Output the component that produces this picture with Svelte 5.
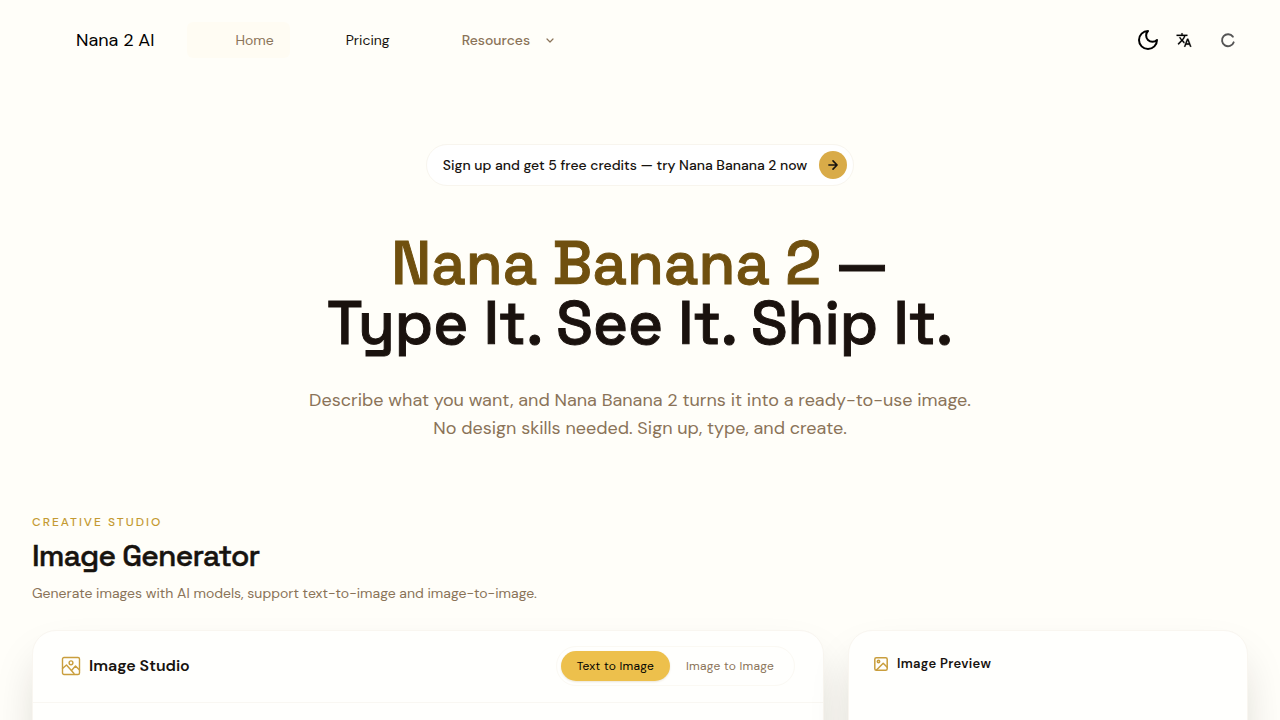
<script>
  let mode = $state('text');
  const modes = [
    { id: 'text', label: 'Text to Image' },
    { id: 'image', label: 'Image to Image' }
  ];
</script>

<div class="page">
  <header class="bar">
    <a class="brand" href="#home"><span class="logo"></span>Nana 2 AI</a>
    <nav aria-label="Main">
      <a class="item current" href="#home">Home</a>
      <a class="item strong" href="#pricing">Pricing</a>
      <button class="item menu" type="button">
        Resources
        <svg width="12" height="12" viewBox="0 0 24 24" fill="none" stroke="currentColor" stroke-width="2.4" stroke-linecap="round" stroke-linejoin="round"><path d="m6 10 6 6 6-6" /></svg>
      </button>
    </nav>
    <div class="tools">
      <button type="button" aria-label="Theme">
        <svg width="24" height="24" viewBox="0 0 24 24" fill="none" stroke="currentColor" stroke-width="2" stroke-linecap="round" stroke-linejoin="round"><path d="M12 3a6 6 0 0 0 9 9 9 9 0 1 1-9-9Z" /></svg>
      </button>
      <button type="button" aria-label="Language">
        <svg width="16" height="16" viewBox="0 0 24 24" fill="currentColor" stroke="currentColor" stroke-width="0.4"><path d="m12.87 15.07-2.54-2.51.03-.03A17.52 17.52 0 0 0 14.07 6H17V4h-7V2H8v2H1v2h11.17C11.5 7.92 10.44 9.75 9 11.35 8.07 10.32 7.3 9.19 6.69 8h-2c.73 1.63 1.73 3.17 2.98 4.56l-5.09 5.02L4 19l5-5 3.11 3.11.76-2.04zM18.5 10h-2L12 22h2l1.12-3h4.75L21 22h2l-4.5-12zm-2.62 7 1.62-4.33L19.12 17h-3.24z" /></svg>
      </button>
      <span class="spinner" role="status" aria-label="Loading">
        <svg width="16" height="16" viewBox="0 0 24 24" fill="none" stroke="currentColor" stroke-width="2.8" stroke-linecap="round"><path d="M20.5 15.5a9 9 0 1 1-1.2-8.5" /></svg>
      </span>
    </div>
  </header>

  <main>
    <section class="hero">
      <a class="promo" href="#signup">
        Sign up and get 5 free credits — try Nana Banana 2 now
        <span class="go">
          <svg width="14" height="14" viewBox="0 0 24 24" fill="none" stroke="currentColor" stroke-width="2.8" stroke-linecap="round" stroke-linejoin="round"><path d="M5 12h14M12 5l7 7-7 7" /></svg>
        </span>
      </a>
      <h1><span>Nana Banana 2</span> —<br />Type It. See It. Ship It.</h1>
      <p>Describe what you want, and Nana Banana 2 turns it into a ready-to-use image.<br />No design skills needed. Sign up, type, and create.</p>
    </section>

    <section class="studio">
      <div class="eyebrow">Creative Studio</div>
      <h2>Image Generator</h2>
      <p class="lead">Generate images with AI models, support text-to-image and image-to-image.</p>
      <div class="panels">
        <article class="card">
          <div class="head">
            <h3>
              <svg width="20" height="20" viewBox="0 0 20 20" fill="none" stroke="currentColor" stroke-width="1.4" stroke-linejoin="round" stroke-linecap="round"><rect x="1.5" y="1.5" width="17" height="17" rx="1.5" /><circle cx="10" cy="6.8" r="1.9" /><path d="m1.5 12.5 4-3.5 7.5 8.5M10.5 14.5l4-4.5 4 4" /></svg>
              Image Studio
            </h3>
            <div class="switch" role="group" aria-label="Mode">
              {#each modes as m}
                <button type="button" class:on={mode === m.id} aria-pressed={mode === m.id} onclick={() => (mode = m.id)}>{m.label}</button>
              {/each}
            </div>
          </div>
          <div class="body"></div>
        </article>
        <article class="card preview">
          <h3>
            <svg width="16" height="16" viewBox="0 0 16 16" fill="none" stroke="currentColor" stroke-width="1.5" stroke-linejoin="round" stroke-linecap="round"><rect x="1.8" y="1.8" width="12.4" height="12.4" rx="1.5" /><circle cx="5.5" cy="5.5" r="1.2" /><path d="m3.5 14 6.7-6.7 4 4" /></svg>
            Image Preview
          </h3>
        </article>
      </div>
    </section>
  </main>
</div>

<style>
  :global(body) {
    background: #fffef9;
  }
  .page {
    font-family: 'DM Sans', Inter, sans-serif;
    font-size: 14px;
    line-height: 20px;
    color: #17130f;
    overflow: hidden;
  }
  a {
    color: inherit;
    text-decoration: none;
  }
  button {
    font: inherit;
    color: inherit;
    border: 0;
    padding: 0;
    background: none;
    cursor: pointer;
  }
  svg {
    display: block;
    flex: none;
  }
  h1, h2, h3, p {
    margin: 0;
  }
  h1, h2 {
    font-family: 'Space Grotesk', Inter, sans-serif;
    font-weight: 500;
    -webkit-text-stroke: 0.016em currentColor;
  }
  .bar {
    display: flex;
    align-items: center;
    height: 80px;
    padding: 0 32px;
  }
  .brand {
    display: flex;
    align-items: center;
    gap: 12px;
    font-size: 18px;
    margin-right: 33px;
    color: #000;
  }
  .logo {
    width: 32px;
    height: 32px;
  }
  nav {
    display: flex;
    gap: 8px;
  }
  .item {
    display: flex;
    align-items: center;
    gap: 14px;
    height: 36px;
    padding: 0 16px 0 48px;
    border-radius: 6px;
    color: #8a7358;
  }
  .current {
    background: #fffcf3;
  }
  .strong {
    color: #17130f;
  }
  .menu {
    font-weight: 500;
  }
  .tools {
    display: flex;
    align-items: center;
    gap: 16px;
    margin-left: auto;
    color: #000;
  }
  .spinner {
    padding: 0 12px;
    color: #555;
  }
  .hero {
    display: flex;
    flex-direction: column;
    align-items: center;
    padding: 64px 32px 72px;
    text-align: center;
  }
  .promo {
    display: flex;
    align-items: center;
    gap: 12px;
    padding: 6px 6px 6px 16px;
    border: 1px solid #f8f5ee;
    border-radius: 24px;
    background: #fff;
    font-weight: 500;
  }
  .go {
    display: grid;
    place-items: center;
    width: 28px;
    height: 28px;
    border-radius: 50%;
    background: #d9ab48;
  }
  h1 {
    margin: 48px 0 32px;
    font-size: 60px;
    line-height: 60px;
    color: #1a120e;
  }
  h1 span {
    color: #70500f;
  }
  .hero p {
    font-size: 18px;
    line-height: 28px;
    color: #8a7358;
  }
  .studio {
    padding: 0 32px;
  }
  .eyebrow {
    font-size: 12px;
    line-height: 16px;
    font-weight: 500;
    letter-spacing: 2px;
    text-transform: uppercase;
    color: #c49a32;
  }
  h2 {
    margin: 8px 0;
    font-size: 30px;
    line-height: 36px;
    letter-spacing: -0.025em;
  }
  .lead {
    line-height: 22px;
    color: #8a7358;
  }
  .panels {
    display: grid;
    grid-template-columns: 792fr 400fr;
    gap: 24px;
    margin-top: 26px;
  }
  .card {
    border: 1px solid #f9f6f0;
    border-radius: 24px;
    background: #fffffd;
    box-shadow: 0 24px 48px -12px rgba(30, 25, 15, 0.22);
  }
  .head {
    display: flex;
    align-items: center;
    justify-content: space-between;
    padding: 15px 28px 16px;
    border-bottom: 1px solid #f9f7f2;
  }
  h3 {
    display: flex;
    align-items: center;
    gap: 8px;
    font-size: 16px;
    font-weight: 600;
  }
  h3 svg {
    color: #c99e3d;
  }
  .switch {
    display: flex;
    padding: 4px;
    border: 1px solid #fbf9f3;
    border-radius: 24px;
  }
  .switch button {
    height: 30px;
    padding: 0 16px;
    border-radius: 16px;
    font-size: 12px;
    letter-spacing: 0.02em;
    color: #8a7358;
  }
  .switch .on {
    background: #edc04c;
    color: #000;
    box-shadow: 0 1px 2px rgba(120, 90, 20, 0.15);
  }
  .body {
    min-height: 320px;
  }
  .preview {
    padding: 23px 24px;
  }
  .preview h3 {
    font-size: 13px;
    letter-spacing: 0.025em;
  }
</style>
